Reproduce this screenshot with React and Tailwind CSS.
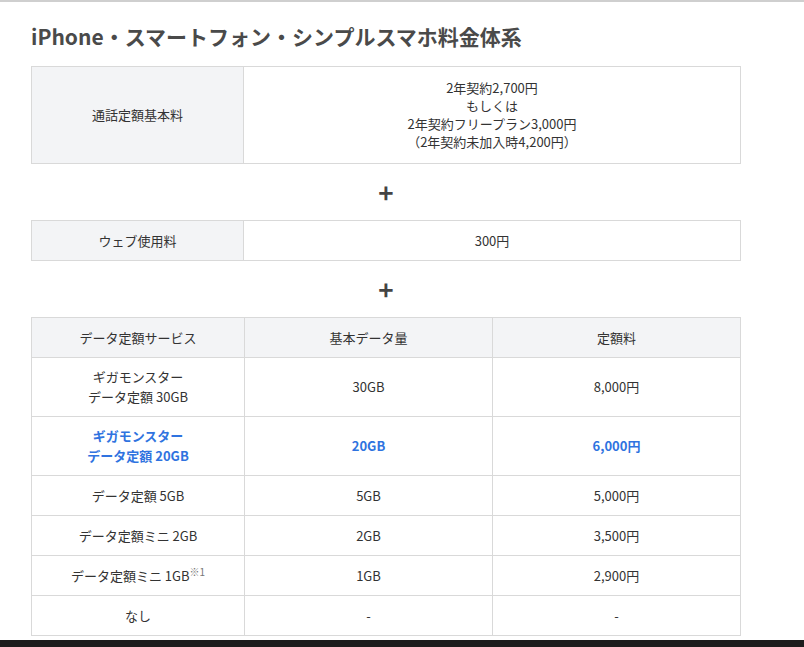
const font = { fontFamily: '"Noto Sans CJK JP", "Noto Sans", sans-serif' };

function Plus() {
  return (
    <div className="flex h-[56px] items-center justify-center">
      <span className="text-[26px] font-bold leading-none text-[#444]">+</span>
    </div>
  );
}

const rows = [
  { name: ["ギガモンスター", "データ定額 30GB"], data: "30GB", price: "8,000円", h: "h-[59px]" },
  { name: ["ギガモンスター", "データ定額 20GB"], data: "20GB", price: "6,000円", h: "h-[59px]", hl: true },
  { name: ["データ定額 5GB"], data: "5GB", price: "5,000円", h: "h-[40px]" },
  { name: ["データ定額ミニ 2GB"], data: "2GB", price: "3,500円", h: "h-[40px]" },
  { name: ["データ定額ミニ 1GB"], note: true, data: "1GB", price: "2,900円", h: "h-[40px]" },
  { name: ["なし"], data: "-", price: "-", h: "h-[40px]" },
];

export default function App() {
  const cell = "border border-[#d9d9d9] text-center align-middle";
  return (
    <div className="flex h-[647px] w-[804px] flex-col bg-white text-[13px] text-[#333]" style={font}>
      <div className="h-[2px] bg-[#cfcfcf]" />
      <div className="flex-1 pl-[31px] pr-[63px]">
        <h1 className="mt-[19px] h-[45px] text-[21px] font-bold leading-[30px] text-[#4a4a4a]">
          iPhone・スマートフォン・シンプルスマホ料金体系
        </h1>
        <table className="w-[710px] border-collapse">
          <tbody>
            <tr className="h-[97px]">
              <td className={`${cell} w-[212px] bg-[#f3f4f6]`}>通話定額基本料</td>
              <td className={`${cell} leading-[18px]`}>
                2年契約2,700円<br />もしくは<br />2年契約フリープラン3,000円<br />（2年契約未加入時4,200円）
              </td>
            </tr>
          </tbody>
        </table>
        <Plus />
        <table className="w-[710px] border-collapse">
          <tbody>
            <tr className="h-[40px]">
              <td className={`${cell} w-[212px] bg-[#f3f4f6]`}>ウェブ使用料</td>
              <td className={cell}>300円</td>
            </tr>
          </tbody>
        </table>
        <Plus />
        <table className="w-[710px] border-collapse">
          <tbody>
            <tr className="h-[40px] bg-[#f3f4f6]">
              <td className={`${cell} w-[213px]`}>データ定額サービス</td>
              <td className={`${cell} w-[248px]`}>基本データ量</td>
              <td className={cell}>定額料</td>
            </tr>
            {rows.map((r, i) => (
              <tr key={i} className={`${r.h} ${r.hl ? "font-bold text-[#2f73e0]" : ""}`}>
                <td className={`${cell} leading-[20px]`}>
                  {r.name.map((n, j) => (
                    <div key={j}>
                      {n}
                      {r.note && <sup className="text-[10px] text-[#777]">※1</sup>}
                    </div>
                  ))}
                </td>
                <td className={cell}>{r.data}</td>
                <td className={cell}>{r.price}</td>
              </tr>
            ))}
          </tbody>
        </table>
      </div>
      <div className="h-[7px] bg-[#1c1c1c]" />
    </div>
  );
}
